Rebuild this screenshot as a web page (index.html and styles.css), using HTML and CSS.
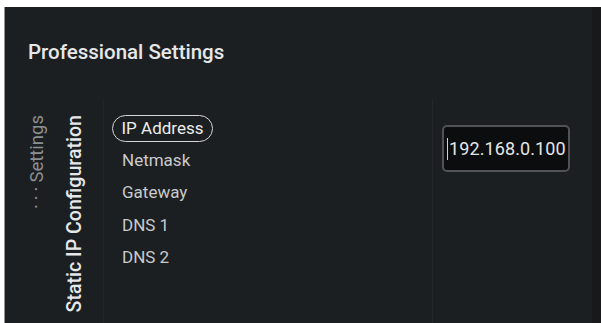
FILE: index.html
```html
<!DOCTYPE html>
<html>
<head>
<meta charset="utf-8">
<link rel="stylesheet" href="styles.css">
</head>
<body>
<div class="page">
  <div class="panel">
    <div class="main">
      <div class="title">Professional Settings</div>
      <div class="row">
        <div class="vcol crumb"><span class="vtext"><span class="dots">···</span>Settings</span></div>
        <div class="vcol section"><span class="vtext">Static IP Configuration</span></div>
        <div class="list">
          <div class="item selected">IP Address</div>
          <div class="item">Netmask</div>
          <div class="item">Gateway</div>
          <div class="item">DNS 1</div>
          <div class="item">DNS 2</div>
        </div>
        <div class="valuecol">
          <div class="input"><span class="cursor"></span>192.168.0.100</div>
        </div>
      </div>
    </div>
    <div class="edge"></div>
  </div>
</div>
</body>
</html>
```

FILE: styles.css
```css
html, body {
  margin: 0;
  padding: 0;
  background: #ffffff;
}

.page {
  width: 601px;
  height: 323px;
  padding: 7px 0 0 4px;
  box-sizing: border-box;
  font-family: Roboto, "Liberation Sans", sans-serif;
}

.panel {
  height: 316px;
  background: #1c1f22;
  border-left: 1px solid #8f9294;
  display: flex;
  overflow: hidden;
}

.main {
  flex: 1;
  display: flex;
  flex-direction: column;
}

.edge {
  width: 9px;
  background: #17191b;
}

.title {
  padding: 33px 0 0 23px;
  height: 24px;
  line-height: 24px;
  font-size: 20.5px;
  font-weight: 500;
  color: #e6e7e8;
}

.row {
  margin-top: 36px;
  flex: 1;
  display: flex;
  align-items: stretch;
}

.vcol {
  width: 20px;
  padding-top: 15px;
  display: flex;
  align-items: flex-start;
}

.crumb {
  margin-left: 22px;
}

.section {
  margin-left: 18px;
}

.vtext {
  writing-mode: vertical-rl;
  transform: rotate(180deg);
  line-height: 20px;
  white-space: nowrap;
}

.crumb .vtext {
  font-size: 18.5px;
  color: #8c8f92;
}

.dots {
  letter-spacing: 4px;
  margin-right: 9px;
}

.section .vtext {
  font-size: 19.6px;
  color: #e6e7e8;
  font-weight: 500;
}

.list {
  margin-left: 18px;
  width: 329px;
  box-sizing: border-box;
  border-left: 1px solid #212427;
  padding: 15px 0 0 8px;
  display: flex;
  flex-direction: column;
  align-items: flex-start;
  gap: 5.2px;
}

.item {
  height: 25px;
  line-height: 25px;
  padding: 0 9px;
  border: 1px solid transparent;
  border-radius: 14px;
  font-size: 17px;
  color: #c9cacb;
}

.item.selected {
  color: #eceded;
  border: 1.5px solid #d4d5d6;
  padding: 0 8.5px;
}

.valuecol {
  flex: 1;
  border-left: 1px solid #24272b;
  padding: 25px 0 0 9px;
}

.input {
  width: 128px;
  height: 47px;
  box-sizing: border-box;
  background: #0c0d0f;
  border: 2px solid #505255;
  border-radius: 5px;
  display: flex;
  align-items: center;
  padding-left: 3px;
  font-size: 18px;
  color: #e4e5e6;
  letter-spacing: 0.1px;
}

.cursor {
  width: 1px;
  height: 22px;
  background: #cfd0d1;
  margin-right: 1px;
}
```
